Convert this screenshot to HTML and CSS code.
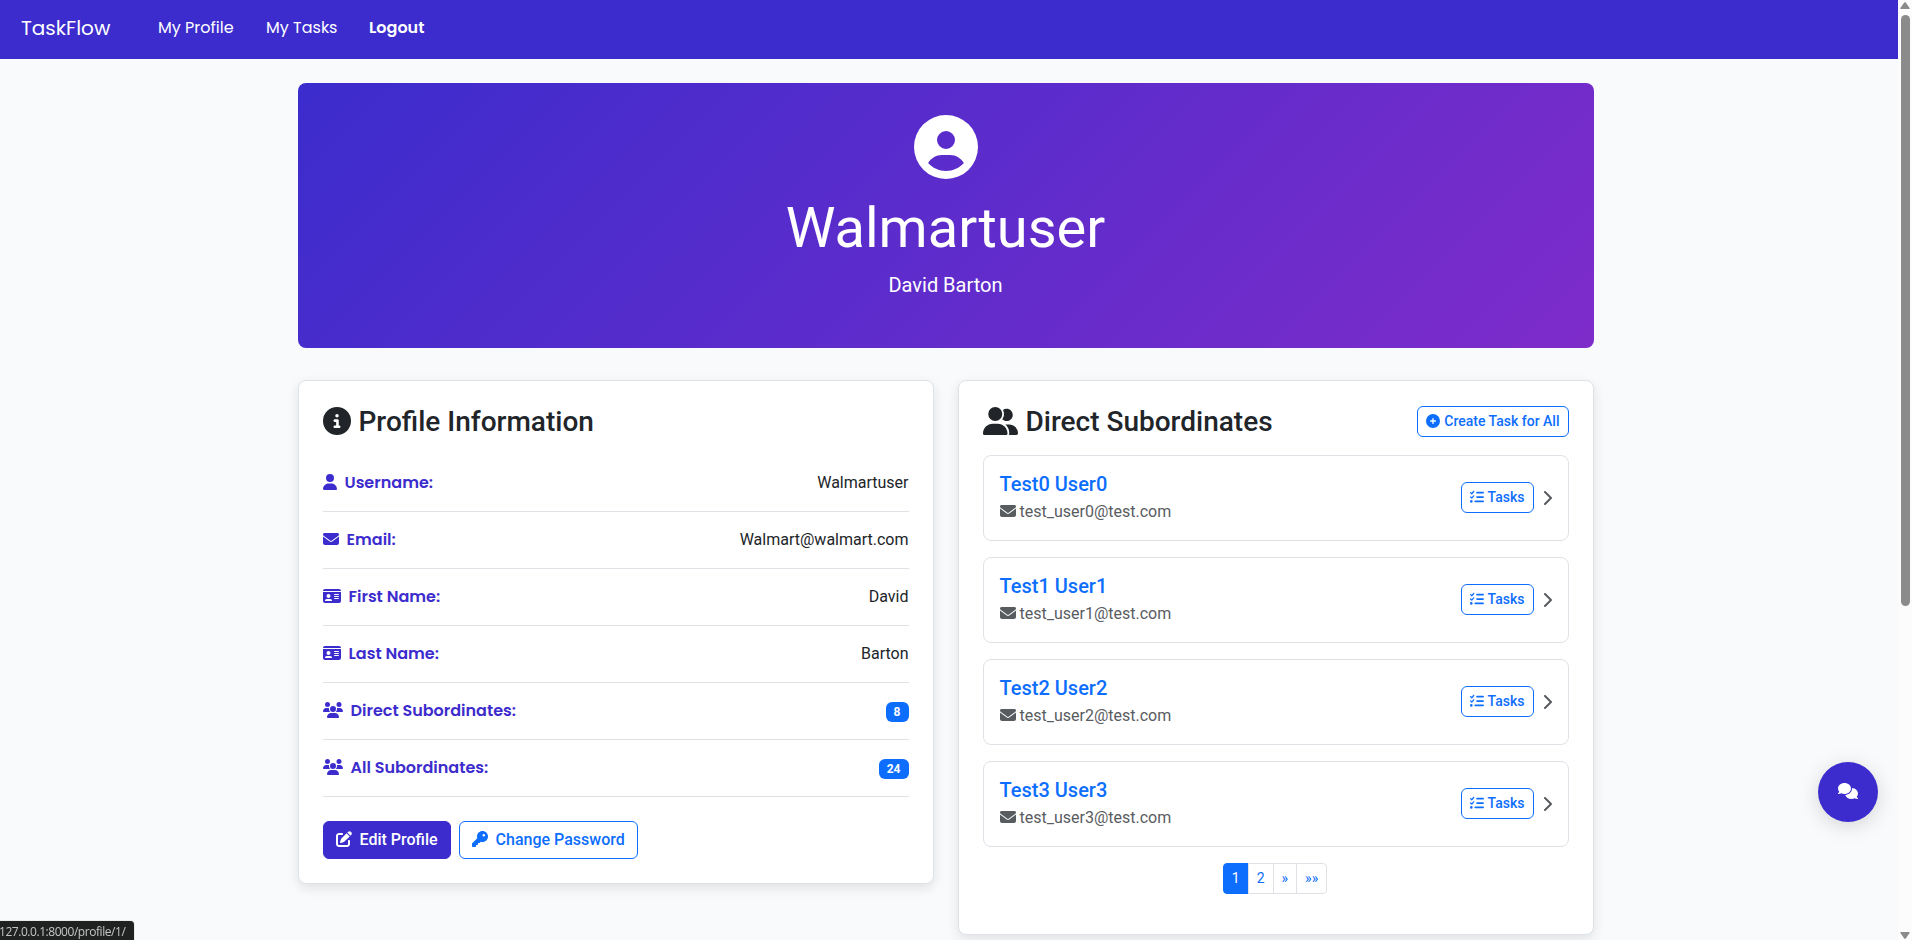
FILE: index.html
```html
<!DOCTYPE html>
<html lang="en">
<head>
<meta charset="utf-8">
<title>TaskFlow</title>
<link rel="stylesheet" href="styles.css">
</head>
<body>
<svg class="sprite" aria-hidden="true">
  <symbol id="circle-user" viewBox="0 0 512 512"><path d="M399 384.2C376.9 345.8 335.4 320 288 320H224c-47.4 0-88.9 25.8-111 64.2c35.2 39.2 86.2 63.8 143 63.8s107.8-24.7 143-63.8zM0 256a256 256 0 1 1 512 0A256 256 0 1 1 0 256zm256 16a72 72 0 1 0 0-144 72 72 0 1 0 0 144z"/></symbol>
  <symbol id="circle-info" viewBox="0 0 512 512"><path d="M256 512A256 256 0 1 0 256 0a256 256 0 1 0 0 512zM216 336h24V272H216c-13.3 0-24-10.7-24-24s10.7-24 24-24h48c13.3 0 24 10.7 24 24v88h8c13.3 0 24 10.7 24 24s-10.7 24-24 24H216c-13.3 0-24-10.7-24-24s10.7-24 24-24zm40-208a32 32 0 1 1 0 64 32 32 0 1 1 0-64z"/></symbol>
  <symbol id="user" viewBox="0 0 448 512"><path d="M224 256A128 128 0 1 0 224 0a128 128 0 1 0 0 256zm-45.7 48C79.8 304 0 383.8 0 482.3C0 498.7 13.3 512 29.7 512H418.3c16.4 0 29.7-13.3 29.7-29.7C448 383.8 368.2 304 269.7 304H178.3z"/></symbol>
  <symbol id="envelope" viewBox="0 0 512 512"><path d="M48 64C21.5 64 0 85.5 0 112c0 15.1 7.1 29.3 19.2 38.4L236.8 313.6c11.4 8.5 27 8.5 38.4 0L492.8 150.4c12.1-9.1 19.2-23.3 19.2-38.4c0-26.5-21.5-48-48-48H48zM0 176V384c0 35.3 28.7 64 64 64H448c35.3 0 64-28.7 64-64V176L294.4 339.2c-22.8 17.1-54 17.1-76.8 0L0 176z"/></symbol>
  <symbol id="id-card" viewBox="0 0 576 512"><path d="M0 96l576 0c0-35.3-28.7-64-64-64L64 32C28.7 32 0 60.7 0 96zm0 32V416c0 35.3 28.7 64 64 64H512c35.3 0 64-28.7 64-64V128H0zM64 405.3c0-29.5 23.9-53.3 53.3-53.3H234.7c29.5 0 53.3 23.9 53.3 53.3c0 5.9-4.8 10.7-10.7 10.7H74.7c-5.9 0-10.7-4.8-10.7-10.7zM176 192a64 64 0 1 1 0 128 64 64 0 1 1 0-128zm176 16c0-8.8 7.2-16 16-16H496c8.8 0 16 7.2 16 16s-7.2 16-16 16H368c-8.8 0-16-7.2-16-16zm0 64c0-8.8 7.2-16 16-16H496c8.8 0 16 7.2 16 16s-7.2 16-16 16H368c-8.8 0-16-7.2-16-16zm0 64c0-8.8 7.2-16 16-16H496c8.8 0 16 7.2 16 16s-7.2 16-16 16H368c-8.8 0-16-7.2-16-16z"/></symbol>
  <symbol id="users" viewBox="0 0 640 512"><path d="M144 0a80 80 0 1 1 0 160A80 80 0 1 1 144 0zM512 0a80 80 0 1 1 0 160A80 80 0 1 1 512 0zM0 298.7C0 239.8 47.8 192 106.7 192h42.7c15.9 0 31 3.5 44.6 9.7c-1.3 7.2-1.9 14.7-1.9 22.3c0 38.2 16.8 72.5 43.3 96c-.2 0-.4 0-.7 0H21.3C9.6 320 0 310.4 0 298.7zM405.3 320c-.2 0-.4 0-.7 0c26.6-23.5 43.3-57.8 43.3-96c0-7.6-.7-15-1.9-22.3c13.6-6.3 28.7-9.7 44.6-9.7h42.7C592.2 192 640 239.8 640 298.7c0 11.8-9.6 21.3-21.3 21.3H405.3zM224 224a96 96 0 1 1 192 0 96 96 0 1 1 -192 0zM128 485.3C128 411.7 187.7 352 261.3 352H378.7C452.3 352 512 411.7 512 485.3c0 14.7-11.9 26.7-26.7 26.7H154.7c-14.7 0-26.7-11.9-26.7-26.7z"/></symbol>
  <symbol id="user-group" viewBox="0 0 640 512"><path d="M96 128a128 128 0 1 1 256 0A128 128 0 1 1 96 128zM0 482.3C0 383.8 79.8 304 178.3 304h91.4C368.2 304 448 383.8 448 482.3c0 16.4-13.3 29.7-29.7 29.7H29.7C13.3 512 0 498.7 0 482.3zM609.3 512H471.4c5.4-9.4 8.6-20.3 8.6-32v-8c0-60.7-27.1-115.2-69.8-151.8c2.4-.1 4.7-.2 7.1-.2h61.4C567.8 320 640 392.2 640 481.3c0 17-13.8 30.7-30.7 30.7zM432 256c-31 0-59-12.6-79.3-32.9C372.4 196.5 384 163.6 384 128c0-26.8-6.6-52.1-18.3-74.3C384.3 40.1 407.2 32 432 32c61.9 0 112 50.1 112 112s-50.1 112-112 112z"/></symbol>
  <symbol id="pen-to-square" viewBox="0 0 512 512"><path d="M471.6 21.7c-21.9-21.9-57.3-21.9-79.2 0L362.3 51.7l97.9 97.9 30.1-30.1c21.9-21.9 21.9-57.3 0-79.2L471.6 21.7zm-299.2 220c-6.1 6.1-10.8 13.6-13.5 21.9l-29.6 88.8c-2.9 8.6-.6 18.1 5.8 24.6s15.9 8.7 24.6 5.8l88.8-29.6c8.2-2.7 15.7-7.4 21.9-13.5L437.7 172.3 339.7 74.3 172.4 241.7zM96 64C43 64 0 107 0 160V416c0 53 43 96 96 96H352c53 0 96-43 96-96V320c0-17.7-14.3-32-32-32s-32 14.3-32 32v96c0 17.7-14.3 32-32 32H96c-17.7 0-32-14.3-32-32V160c0-17.7 14.3-32 32-32h96c17.7 0 32-14.3 32-32s-14.3-32-32-32H96z"/></symbol>
  <symbol id="key" viewBox="0 0 512 512"><path d="M336 352c97.2 0 176-78.8 176-176S433.2 0 336 0S160 78.8 160 176c0 18.7 2.9 36.8 8.3 53.7L7 391c-4.5 4.5-7 10.6-7 17v80c0 13.3 10.7 24 24 24h80c13.3 0 24-10.7 24-24V448h40c13.3 0 24-10.7 24-24V384h40c6.4 0 12.5-2.5 17-7l33.3-33.3c16.9 5.4 35 8.3 53.7 8.3zM376 96a40 40 0 1 1 0 80 40 40 0 1 1 0-80z"/></symbol>
  <symbol id="circle-plus" viewBox="0 0 512 512"><path d="M256 512A256 256 0 1 0 256 0a256 256 0 1 0 0 512zM232 344V280H168c-13.3 0-24-10.7-24-24s10.7-24 24-24h64V168c0-13.3 10.7-24 24-24s24 10.7 24 24v64h64c13.3 0 24 10.7 24 24s-10.7 24-24 24H280v64c0 13.3-10.7 24-24 24s-24-10.7-24-24z"/></symbol>
  <symbol id="list-check" viewBox="0 0 512 512"><path d="M152.1 38.2c9.9 8.9 10.7 24 1.8 33.9l-72 80c-4.4 4.9-10.6 7.8-17.2 7.9s-12.9-2.4-17.6-7L7 113C-2.3 103.6-2.3 88.4 7 79s24.6-9.4 33.9 0l22.1 22.1 55.1-61.2c8.9-9.9 24-10.7 33.9-1.8zm0 160c9.9 8.9 10.7 24 1.8 33.9l-72 80c-4.4 4.9-10.6 7.8-17.2 7.9s-12.9-2.4-17.6-7L7 273c-9.4-9.4-9.4-24.6 0-33.9s24.6-9.4 33.9 0l22.1 22.1 55.1-61.2c8.9-9.9 24-10.7 33.9-1.8zM224 96c0-17.7 14.3-32 32-32H480c17.7 0 32 14.3 32 32s-14.3 32-32 32H256c-17.7 0-32-14.3-32-32zm0 160c0-17.7 14.3-32 32-32H480c17.7 0 32 14.3 32 32s-14.3 32-32 32H256c-17.7 0-32-14.3-32-32zM160 416c0-17.7 14.3-32 32-32H480c17.7 0 32 14.3 32 32s-14.3 32-32 32H192c-17.7 0-32-14.3-32-32zM48 368a48 48 0 1 1 0 96 48 48 0 1 1 0-96z"/></symbol>
  <symbol id="chevron-right" viewBox="0 0 320 512"><path d="M310.6 233.4c12.5 12.5 12.5 32.8 0 45.3l-192 192c-12.5 12.5-32.8 12.5-45.3 0s-12.5-32.8 0-45.3L242.7 256 73.4 86.6c-12.5-12.5-12.5-32.8 0-45.3s32.8-12.5 45.3 0l192 192z"/></symbol>
  <symbol id="comments" viewBox="0 0 640 512"><path d="M208 352c114.9 0 208-78.8 208-176S322.9 0 208 0S0 78.8 0 176c0 38.6 14.7 74.3 39.6 103.4c-3.5 9.4-8.7 17.7-14.2 24.7c-4.8 6.2-9.7 11-13.3 14.3c-1.8 1.6-3.3 2.9-4.3 3.7c-.5 .4-.9 .7-1.1 .8l-.2 .2C1 327.2-1.4 334.4 .8 340.9S9.1 352 16 352c21.8 0 43.8-5.6 62.1-12.5c9.2-3.5 17.8-7.4 25.2-11.4C134.1 343.3 169.8 352 208 352zM448 176c0 112.3-99.1 196.9-216.5 207C255.8 457.4 336.4 512 432 512c38.2 0 73.9-8.7 104.7-23.9c7.5 4 16 7.9 25.2 11.4c18.3 6.9 40.3 12.5 62.1 12.5c6.9 0 13.1-4.5 15.2-11.1c2.1-6.6-.2-13.8-5.8-17.9l-.2-.2c-.2-.2-.6-.4-1.1-.8c-1-.8-2.5-2-4.3-3.7c-3.6-3.3-8.5-8.1-13.3-14.3c-5.5-7-10.7-15.4-14.2-24.7c24.9-29 39.6-64.7 39.6-103.4c0-92.8-84.9-168.9-192.6-175.5c.4 5.1 .6 10.3 .6 15.5z"/></symbol>
</svg>

<div class="shell">
  <div class="page">
    <nav class="navbar">
      <a class="brand">TaskFlow</a>
      <a class="nav-link nav-profile">My Profile</a>
      <a class="nav-link nav-tasks">My Tasks</a>
      <a class="nav-link logout">Logout</a>
    </nav>

    <main class="container">
      <header class="hero">
        <svg class="hero-icon"><use href="#circle-user"/></svg>
        <h1 class="hero-title">Walmartuser</h1>
        <p class="hero-name">David Barton</p>
      </header>

      <div class="columns">
        <section class="card">
          <h3 class="card-title"><svg class="icon"><use href="#circle-info"/></svg>Profile Information</h3>
          <div class="info-row"><span class="label"><svg class="icon w14"><use href="#user"/></svg><span>Username:</span></span><span>Walmartuser</span></div>
          <div class="info-row"><span class="label"><svg class="icon"><use href="#envelope"/></svg><span>Email:</span></span><span>Walmart@walmart.com</span></div>
          <div class="info-row"><span class="label"><svg class="icon w18"><use href="#id-card"/></svg><span>First Name:</span></span><span>David</span></div>
          <div class="info-row"><span class="label"><svg class="icon w18"><use href="#id-card"/></svg><span>Last Name:</span></span><span>Barton</span></div>
          <div class="info-row"><span class="label"><svg class="icon w20"><use href="#users"/></svg><span>Direct Subordinates:</span></span><span class="badge">8</span></div>
          <div class="info-row"><span class="label"><svg class="icon w20"><use href="#users"/></svg><span>All Subordinates:</span></span><span class="badge">24</span></div>
          <div class="actions">
            <a class="btn btn-primary"><svg class="icon"><use href="#pen-to-square"/></svg>Edit Profile</a>
            <a class="btn btn-outline"><svg class="icon"><use href="#key"/></svg>Change Password</a>
          </div>
        </section>

        <section class="card">
          <div class="card-head">
            <h3 class="card-title"><svg class="icon w20"><use href="#user-group"/></svg>Direct Subordinates</h3>
            <a class="btn btn-outline btn-sm"><svg class="icon"><use href="#circle-plus"/></svg>Create Task for All</a>
          </div>
          <div class="member">
            <div class="member-text"><h5 class="member-name">Test0 User0</h5><p class="member-mail"><svg class="icon"><use href="#envelope"/></svg>test_user0@test.com</p></div>
            <a class="btn btn-outline btn-sm"><svg class="icon"><use href="#list-check"/></svg>Tasks</a><svg class="icon chevron"><use href="#chevron-right"/></svg>
          </div>
          <div class="member">
            <div class="member-text"><h5 class="member-name">Test1 User1</h5><p class="member-mail"><svg class="icon"><use href="#envelope"/></svg>test_user1@test.com</p></div>
            <a class="btn btn-outline btn-sm"><svg class="icon"><use href="#list-check"/></svg>Tasks</a><svg class="icon chevron"><use href="#chevron-right"/></svg>
          </div>
          <div class="member">
            <div class="member-text"><h5 class="member-name">Test2 User2</h5><p class="member-mail"><svg class="icon"><use href="#envelope"/></svg>test_user2@test.com</p></div>
            <a class="btn btn-outline btn-sm"><svg class="icon"><use href="#list-check"/></svg>Tasks</a><svg class="icon chevron"><use href="#chevron-right"/></svg>
          </div>
          <div class="member">
            <div class="member-text"><h5 class="member-name">Test3 User3</h5><p class="member-mail"><svg class="icon"><use href="#envelope"/></svg>test_user3@test.com</p></div>
            <a class="btn btn-outline btn-sm"><svg class="icon"><use href="#list-check"/></svg>Tasks</a><svg class="icon chevron"><use href="#chevron-right"/></svg>
          </div>
          <div class="pagination">
            <a class="page-link active">1</a><a class="page-link">2</a><a class="page-link">»</a><a class="page-link">»»</a>
          </div>
        </section>
      </div>
    </main>
  </div>

  <div class="scrollbar">
    <svg class="arrow" viewBox="0 0 10 8"><path d="M4.2 .6Q5 -.3 5.8 .6L9.6 6Q10 7 9 7H1Q0 7 .4 6Z"/></svg>
    <div class="thumb"></div>
    <svg class="arrow" viewBox="0 0 10 8"><path d="M4.2 7.4Q5 8.3 5.8 7.4L9.6 2Q10 1 9 1H1Q0 1 .4 2Z"/></svg>
  </div>
</div>

<button class="chat"><svg class="icon w20"><use href="#comments"/></svg></button>
<div class="status"><span>127.0.0.1:8000/profile/1/</span></div>
</body>
</html>
```
FILE: styles.css
```css
* { box-sizing: border-box; }
body {
  margin: 0;
  height: 940px;
  overflow: hidden;
  background: #f9fafc;
  color: #212529;
  font: 400 16px/24px Roboto, sans-serif;
}
h1, h3, h5, p { margin: 0; }
.sprite { position: absolute; width: 0; height: 0; }
.icon { width: 1em; height: 1em; margin-bottom: 2px; fill: currentColor; flex: none; }
.w14 { width: .875em; }
.w18 { width: 1.125em; }
.w20 { width: 1.25em; }

.shell { display: flex; height: 940px; }
.page { flex: 1; min-width: 0; }

.navbar {
  display: flex;
  height: 59px;
  padding: 0 0 4px 21px;
  align-items: center;
  background: #3c2ccd;
  color: #fff;
  font-family: Poppins, Inter, sans-serif;
  font-weight: 400;
}
.brand { width: 137px; font-size: 20px; font-weight: 400; }
.nav-profile { width: 108px; }
.nav-tasks { width: 103px; }
.logout { font-weight: 600; }

.container { width: 1296px; margin: 24px 0 0 297.5px; }
.hero {
  display: flex;
  flex-direction: column;
  align-items: center;
  height: 265px;
  padding: 32px;
  border-radius: 8px;
  background: linear-gradient(135deg, #3c2ccd, #7e2cca);
  color: #fff;
}
.hero-icon { width: 64px; height: 64px; fill: #fff; }
.hero-title { margin-top: 16px; font-size: 56px; line-height: 67px; font-weight: 400; }
.hero-name { margin-top: 8px; font-size: 20px; line-height: 30px; }

.columns {
  display: grid;
  grid-template-columns: 1fr 1fr;
  gap: 24px;
  align-items: start;
  margin-top: 32px;
}
.card {
  padding: 24px;
  border: 1px solid #dee2e6;
  border-radius: 8px;
  background: #fff;
  box-shadow: 0 4px 12px rgba(0, 0, 0, .1);
}
.card-title {
  display: flex;
  align-items: center;
  gap: 8px;
  height: 34px;
  margin-bottom: 16px;
  font-size: 28px;
  font-weight: 500;
}
.card-head { display: flex; justify-content: space-between; align-items: flex-start; margin-bottom: 16px; }
.card-head .card-title { margin: 0; }
.card-head .btn { margin-top: 1px; }

.info-row {
  display: flex;
  justify-content: space-between;
  align-items: center;
  height: 57px;
  border-bottom: 1px solid #dee2e6;
}
.label {
  display: flex;
  align-items: center;
  gap: 8px;
  color: #3c2ccd;
  font-family: Poppins, Inter, sans-serif;
  font-weight: 600;
}
.badge {
  margin-top: 2px;
  padding: 4px 8px;
  border-radius: 6px;
  background: #0d6efd;
  color: #fff;
  font-size: 12px;
  line-height: 12px;
  font-weight: 700;
}
.actions { display: flex; gap: 8px; margin-top: 24px; }
.btn {
  display: flex;
  align-items: center;
  gap: 8px;
  height: 38px;
  padding: 0 12px;
  border: 1px solid #0d6efd;
  border-radius: 6px;
  font-weight: 500;
}
.btn-primary { border-color: #3c2ccd; background: #3c2ccd; color: #fff; }
.btn-outline { color: #0d6efd; }
.btn-sm { gap: 4px; height: 31px; padding: 0 8px; font-size: 14px; line-height: 21px; }

.member {
  display: flex;
  align-items: center;
  height: 86px;
  margin-bottom: 16px;
  padding: 0 16px;
  border: 1px solid #dee2e6;
  border-radius: 8px;
}
.member .btn { margin-bottom: 1px; }
.member-text { flex: 1; }
.member-name { margin-bottom: 4px; color: #0d6efd; font-size: 20px; line-height: 24px; font-weight: 500; }
.member-mail { display: flex; align-items: center; gap: 4px; color: #595c5f; }
.chevron { width: 10px; margin: 0 0 0 8px; color: #595c5f; }

.pagination { display: flex; justify-content: center; margin-bottom: 16px; }
.page-link {
  height: 31px;
  margin-left: -1px;
  padding: 4px 8px;
  border: 1px solid #dee2e6;
  background: #fff;
  color: #0d6efd;
  font-size: 14px;
  line-height: 21px;
}
.page-link:first-child { border-radius: 4px 0 0 4px; }
.page-link:last-child { border-radius: 0 4px 4px 0; }
.page-link.active { border-color: #0d6efd; background: #0d6efd; color: #fff; }

.scrollbar {
  display: flex;
  flex-direction: column;
  align-items: center;
  width: 14px;
  height: 940px;
  padding: 2px 0 1px;
  background: #fcfcfc;
}
.arrow { width: 10px; height: 8px; fill: #8b8b8b; }
.thumb { width: 9px; height: 591px; margin: 5px 0 auto; border-radius: 5px; background: #8b8b8b; }

.chat {
  position: fixed;
  left: 1818px;
  top: 762px;
  display: flex;
  align-items: center;
  justify-content: center;
  width: 60px;
  height: 60px;
  padding: 0;
  border: 0;
  border-radius: 50%;
  background: #3c2ccd;
  color: #fff;
  font-size: 16px;
  box-shadow: 0 4px 20px rgba(0, 0, 0, .15);
}
.status {
  position: fixed;
  left: 0;
  bottom: 0;
  display: flex;
  width: 134px;
  height: 19px;
  border-radius: 0 4px 0 0;
  background: #202121;
  color: #c4c7c5;
  font: 12px/21px "Open Sans", sans-serif;
  letter-spacing: -.45px;
  white-space: nowrap;
  box-shadow: 0 0 1px rgba(0, 0, 0, .6);
}
.status span { margin-left: -1px; }
```
